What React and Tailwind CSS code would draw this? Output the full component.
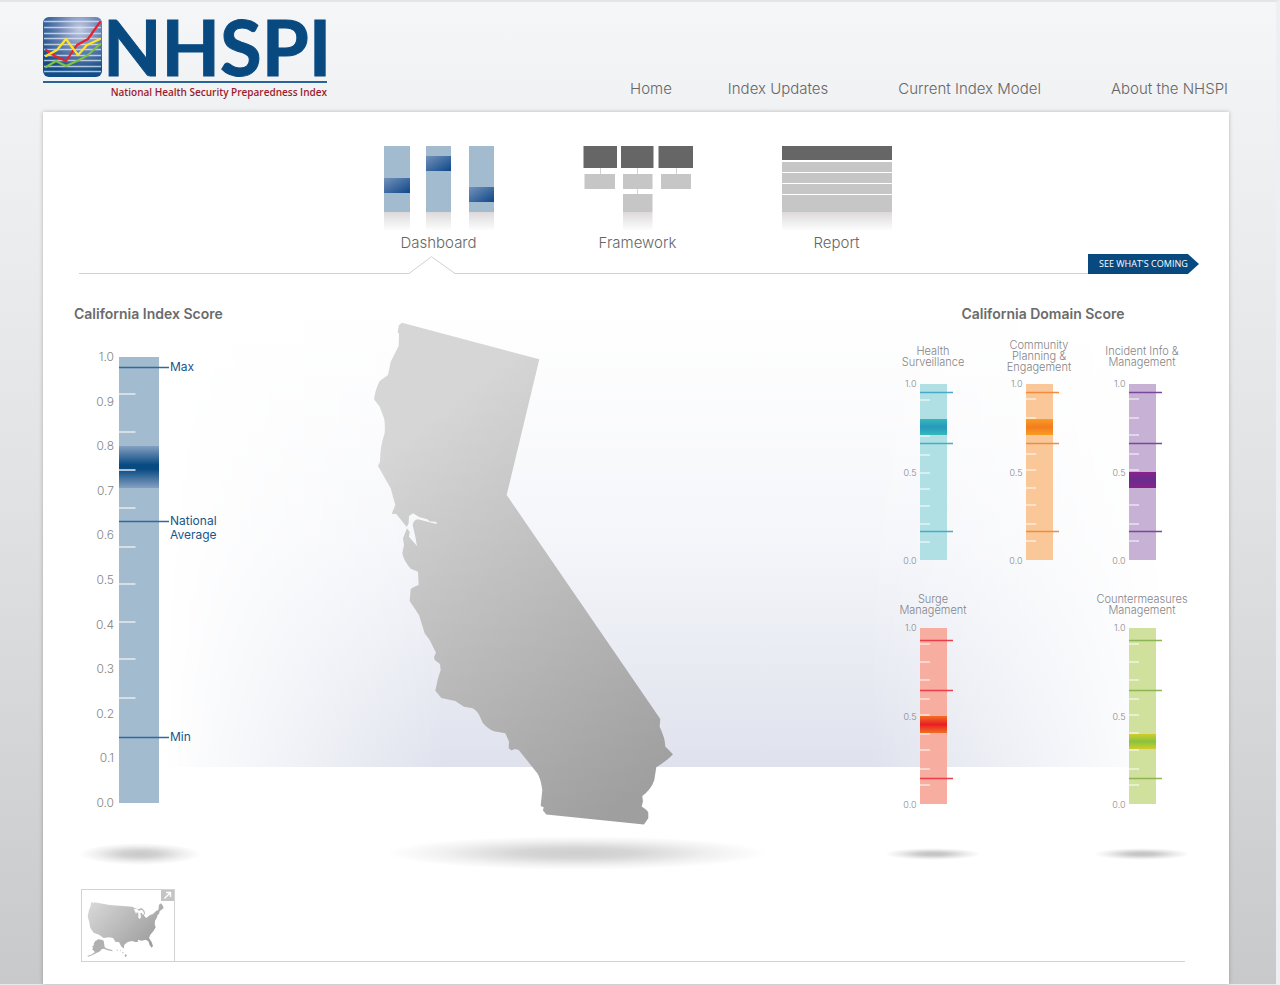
import React from "react";

const NAV = [
  { label: "Home", gap: "" },
  { label: "Index Updates", gap: "ml-14" },
  { label: "Current Index Model", gap: "ml-[70px]" },
  { label: "About the NHSPI", gap: "ml-[70px]" },
];

function Logo() {
  return (
    <a href="#home" className="flex w-[284px] flex-col text-[#084a80]">
      <span className="flex h-[62px] items-center justify-between">
        <svg className="h-[60px] w-[60px] shrink-0" viewBox="0 0 60 60" aria-hidden="true">
          <defs>
            <radialGradient id="tile" cx="0.62" cy="0.2" r="0.75">
              <stop offset="0" stopColor="#c3cbe2" />
              <stop offset="0.5" stopColor="#6480b1" />
              <stop offset="1" stopColor="#124d88" />
            </radialGradient>
          </defs>
          <rect width="59" height="60" rx="6" fill="url(#tile)" />
          <g stroke="#e3e9f4" strokeOpacity="0.75" strokeWidth="1.4">
            {[4, 10, 16, 21, 27, 32, 38, 43, 49, 54].map((y) => (
              <path key={y} d={`M1 ${y}.5H58`} />
            ))}
          </g>
          <g fill="none" strokeWidth="2.2" strokeLinejoin="round" strokeLinecap="round">
            <path d="M3 50 13 44 23 49 36 43 45 38 57 27" stroke="#7cc142" />
            <path d="M3 33 12 39 23 44 34 28 45 22 57 5" stroke="#e8212b" />
            <path d="M3 39 14 33 23 22 35 38 44 28 57 22" stroke="#fde428" />
          </g>
        </svg>
        <span className="-mr-1 font-['Lato',sans-serif] text-[76px] leading-[62px] font-bold [-webkit-text-stroke:1px_#084a80]">
          NHSPI
        </span>
      </span>
      <span className="mt-[3px] h-[2px] bg-[#2a6496]" />
      <span className="mt-px text-right font-['Open_Sans',sans-serif] text-[10px] leading-4 font-semibold text-[#9c1c2c]">
        National Health Security Preparedness Index
      </span>
    </a>
  );
}

function DashboardIcon() {
  const bars = [
    { x: 0, w: 26, y: 32 },
    { x: 42, w: 25, y: 10 },
    { x: 85, w: 25, y: 41 },
  ];
  return (
    <svg className="h-[86px] w-[110px]" viewBox="0 0 110 86" aria-hidden="true">
      <defs>
        <linearGradient id="mark" x1="0" y1="0" x2="1" y2="1">
          <stop offset="0" stopColor="#7392bb" />
          <stop offset="1" stopColor="#0f4788" />
        </linearGradient>
        <linearGradient id="fade" x1="0" y1="0" x2="0" y2="1">
          <stop offset="0" stopColor="#dcd9da" />
          <stop offset="1" stopColor="#ffffff" />
        </linearGradient>
      </defs>
      {bars.map((b) => (
        <g key={b.x}>
          <rect x={b.x} y="0" width={b.w} height="66" fill="#a3bbce" />
          <rect x={b.x} y={b.y} width={b.w} height="15" fill="url(#mark)" />
          <rect x={b.x} y="66" width={b.w} height="19" fill="url(#fade)" />
        </g>
      ))}
    </svg>
  );
}

function FrameworkIcon() {
  return (
    <svg className="h-[86px] w-[110px]" viewBox="0 0 110 86" aria-hidden="true">
      <path d="M17.5 22v6M54.5 22v6M93.5 22v6M54.5 43v6" stroke="#d2d2d2" />
      <g fill="#666666">
        <rect x="0.5" y="0" width="33.5" height="22" />
        <rect x="38" y="0" width="32.5" height="22" />
        <rect x="75.5" y="0" width="34.5" height="22" />
      </g>
      <g fill="#c6c6c6">
        <rect x="1.5" y="28" width="30.5" height="15" />
        <rect x="40" y="28" width="29.5" height="15" />
        <rect x="78" y="28" width="30" height="15" />
        <rect x="40" y="48" width="29.5" height="18" />
      </g>
      <rect x="40" y="66" width="29.5" height="19" fill="url(#fade)" />
    </svg>
  );
}

function ReportIcon() {
  return (
    <svg className="h-[86px] w-[110px]" viewBox="0 0 110 86" aria-hidden="true">
      <rect width="110" height="14" fill="#666666" />
      <g fill="#c6c6c6">
        <rect y="16" width="110" height="10" />
        <rect y="27" width="110" height="10" />
        <rect y="38" width="110" height="10" />
        <rect y="49" width="110" height="17" />
      </g>
      <rect y="66" width="110" height="19" fill="url(#fade)" />
    </svg>
  );
}

const TABS = [
  { label: "Dashboard", Icon: DashboardIcon },
  { label: "Framework", Icon: FrameworkIcon },
  { label: "Report", Icon: ReportIcon },
];

function GroundShadow({ id, className, color }) {
  return (
    <svg className={className} viewBox="0 0 100 20" preserveAspectRatio="none" aria-hidden="true">
      <defs>
        <radialGradient id={id}>
          <stop offset="0" stopColor={color} />
          <stop offset="0.3" stopColor={color} stopOpacity="0.85" />
          <stop offset="0.7" stopColor={color} stopOpacity="0.3" />
          <stop offset="1" stopColor={color} stopOpacity="0" />
        </radialGradient>
      </defs>
      <ellipse cx="50" cy="10" rx="50" ry="10" fill={`url(#${id})`} />
    </svg>
  );
}

const INDEX_TICKS = [37, 75, 113, 151, 190, 227, 265, 302, 341];
const INDEX_LABELS = ["1.0", "0.9", "0.8", "0.7", "0.6", "0.5", "0.4", "0.3", "0.2", "0.1", "0.0"];
const INDEX_MARKS = [
  { label: "Max", y: 10 },
  { label: "National Average", y: 164 },
  { label: "Min", y: 380 },
];

function IndexScore() {
  return (
    <section className="w-[170px]">
      <h2 className="text-[14px] leading-5 font-semibold whitespace-nowrap text-[#6b6b6b]">California Index Score</h2>
      <div className="mt-[33px] flex pl-5">
        <div className="-my-2 flex h-[462px] w-5 flex-col justify-between text-right text-[12px] leading-4 font-light text-[#858587]">
          {INDEX_LABELS.map((l) => (
            <span key={l}>{l}</span>
          ))}
        </div>
        <div className="relative ml-[5px] h-[446px] w-10">
          <svg className="h-full w-10 overflow-visible" viewBox="0 0 40 446" aria-hidden="true">
            <defs>
              <linearGradient id="indexBand" x1="0" y1="0" x2="0" y2="1">
                <stop offset="0" stopColor="#85a0c1" />
                <stop offset="0.45" stopColor="#084a82" />
                <stop offset="0.55" stopColor="#084a82" />
                <stop offset="1" stopColor="#85a0c1" />
              </linearGradient>
            </defs>
            <rect width="40" height="446" fill="#a3bbce" />
            <rect y="89" width="40" height="42" fill="url(#indexBand)" />
            {INDEX_TICKS.map((y) => (
              <path key={y} d={`M0 ${y}H16.5`} stroke="#e4ebf1" strokeWidth="1.5" />
            ))}
            {INDEX_MARKS.map((m) => (
              <path key={m.label} d={`M0 ${m.y}.5H50`} stroke="#2d6a9e" strokeWidth="1.3" />
            ))}
          </svg>
          {INDEX_MARKS.map((m) => (
            <span
              key={m.label}
              className="absolute left-[51px] -mt-[7px] w-[60px] text-[12px] leading-[14px] text-[#17568d]"
              style={{ top: m.y }}
            >
              {m.label}
            </span>
          ))}
        </div>
      </div>
      <GroundShadow id="indexShadow" className="mt-10 ml-[5px] h-[22px] w-[122px]" color="#c9c9c9" />
    </section>
  );
}

function StateMap() {
  return (
    <div className="flex flex-col">
      <svg className="h-[506px] w-[380px]" viewBox="0 0 380 506" role="img" aria-label="California">
        <defs>
          <linearGradient id="land" gradientUnits="userSpaceOnUse" x1="120" y1="400" x2="900" y2="1400">
            <stop offset="0" stopColor="#d6d6d6" />
            <stop offset="0.4" stopColor="#c1c0c1" />
            <stop offset="1" stopColor="#9f9f9f" />
          </linearGradient>
        </defs>
        <path
          transform="translate(-1 -10) scale(0.3333)"
          fill="url(#land)"
          d="M132 38 544 148 446 555 907 1227 905 1250Q922 1285 922 1310L945 1333Q930 1350 895 1372L889 1410Q880 1438 853 1458L855 1475 851 1490Q868 1500 871 1508L871 1525 858 1544 565 1514 555 1502 557 1492 548 1488 553 1440Q548 1405 538 1390L510 1355 482 1320 470 1317 461 1322 452 1315 453 1295 442 1270 408 1264Q390 1257 375 1240L362 1212Q350 1195 340 1194L318 1190 292 1173 250 1164 232 1142 240 1105 248 1080 246 1062 230 1050 228 1040 234 1028 215 990 200 970 183 915 155 873 158 838Q165 830 182 825L180 785 158 776Q137 752 133 730L138 705 135 685 147 655 155 665 153 680 177 708 172 680 164 645Q166 630 180 628L235 642 236 636 214 634 208 628 185 622 165 610 153 618 152 640 146 651 115 612 101 611 112 585 98 535 60 468 66 455Q66 410 80 370 82 340 78 325L65 290 48 268Q52 238 65 213L90 195 98 155 122 108 123 72 119 65 123 45Z"
        />
      </svg>
      <GroundShadow id="mapShadow" className="mt-2.5 ml-7 h-[34px] w-[380px]" color="#cecece" />
    </div>
  );
}

const DOMAINS = [
  {
    id: "surveillance", place: "pt-[6px] [&>h3]:h-[27px]", lines: ["Health", "Surveillance"], bar: "#b1e0e4", line: "#46aac8",
    edge: "#35b8bd", core: "#2798ba", ticks: [16, 52, 71, 89, 105, 122, 140, 158], marks: [8, 59, 147], band: [35, 16],
  },
  {
    id: "planning", place: "[&>h3]:h-[33px]", lines: ["Community", "Planning &", "Engagement"], bar: "#fac898", line: "#f48a3e",
    edge: "#f89d20", core: "#f47b20", ticks: [15, 34, 70, 86, 104, 121, 140, 157], marks: [8, 59, 147], band: [35, 16],
  },
  {
    id: "incident", place: "pt-[6px] [&>h3]:h-[27px]", lines: ["Incident Info &", "Management"], bar: "#c7b2d5", line: "#7a479f",
    edge: "#8b2187", core: "#672d8f", ticks: [15, 34, 51, 70, 86, 121, 140, 157], marks: [8, 59, 147], band: [88, 16],
  },
  {
    id: "surge", place: "pt-[10px] [&>h3]:h-[23px]", lines: ["Surge", "Management"], bar: "#f7ada0", line: "#ec3d4a",
    edge: "#f26f21", core: "#e91e25", ticks: [16, 34, 52, 71, 87, 106, 122, 141, 157], marks: [12, 62, 150], band: [88, 17],
  },
  {
    id: "countermeasures", place: "col-start-3 pt-[10px] [&>h3]:h-[23px]", lines: ["Countermeasures", "Management"], bar: "#d0e19d", line: "#8fb454",
    edge: "#d3cc2b", core: "#86c440", ticks: [16, 34, 52, 71, 87, 105, 122, 141, 157], marks: [12, 62, 150], band: [106, 15],
  },
];

function DomainGauge({ data }) {
  return (
    <div className={`flex flex-col items-center ${data.place}`}>
      <h3 className="flex flex-col text-center text-[11px] leading-[11px] font-light whitespace-nowrap text-[#858588]">
        {data.lines.map((l) => (
          <span key={l}>{l}</span>
        ))}
      </h3>
      <div className="relative mt-[11px] h-44 w-[27px]">
        <svg className="h-full w-[27px] overflow-visible" viewBox="0 0 27 176" aria-hidden="true">
          <defs>
            <linearGradient id={data.id} x1="0" y1="0" x2="0" y2="1">
              <stop offset="0" stopColor={data.edge} />
              <stop offset="0.5" stopColor={data.core} />
              <stop offset="1" stopColor={data.edge} />
            </linearGradient>
          </defs>
          <rect width="27" height="176" fill={data.bar} />
          {data.ticks.map((y) => (
            <path key={y} d={`M0 ${y}H10`} stroke="#ffffff" strokeOpacity="0.65" strokeWidth="1.5" />
          ))}
          <rect y={data.band[0]} width="27" height={data.band[1]} fill={`url(#${data.id})`} />
          {data.marks.map((y) => (
            <path key={y} d={`M0 ${y}.5H33`} stroke={data.line} strokeWidth="1.3" />
          ))}
        </svg>
        <div className="absolute -top-[5px] right-full mr-[3px] flex h-[187px] flex-col justify-between text-right text-[9px] leading-[10px] font-light text-[#858588]">
          <span>1.0</span>
          <span>0.5</span>
          <span>0.0</span>
        </div>
      </div>
    </div>
  );
}

function DomainScores() {
  return (
    <section className="w-[324px]">
      <h2 className="text-center text-[14px] leading-5 font-semibold text-[#6b6b6b]">California Domain Score</h2>
      <div className="mt-4 grid grid-cols-[104px_108px_98px] gap-y-6">
        {DOMAINS.map((d) => (
          <DomainGauge key={d.id} data={d} />
        ))}
      </div>
      <div className="mt-11 grid grid-cols-[104px_108px_98px] justify-items-center">
        <GroundShadow id="surgeShadow" className="h-3 w-24" color="#c2c2c2" />
        <GroundShadow id="counterShadow" className="col-start-3 h-3 w-24" color="#c2c2c2" />
      </div>
    </section>
  );
}

function CountryButton() {
  return (
    <button type="button" aria-label="Show the national map" className="relative h-[73px] w-[94px] border border-[#d3d3d3] bg-white">
      <svg className="h-[71px] w-[92px]" viewBox="67 58 276 213" aria-hidden="true">
        <defs>
          <linearGradient id="us" x1="0" y1="0" x2="1" y2="0.6">
            <stop offset="0" stopColor="#dadada" />
            <stop offset="1" stopColor="#9f9f9f" />
          </linearGradient>
        </defs>
        <path
          fill="url(#us)"
          d="M95 93 101 98 104 95 150 103 218 108 224 112 236 116 246 112 254 120 256 126 253 135 260 142 270 134 280 130 290 120 296 118 298 102 304 98 309 104 312 112 300 122 298 130 294 132 292 140 286 150 285 160 288 170 282 180 272 192 268 202 276 214 280 226 276 231 270 224 266 212 258 207 246 210 234 207 236 213 228 214 216 211 204 214 194 222 192 234 184 226 178 214 168 214 160 202 148 200 132 202 118 192 102 186 92 172 88 150 84 138 88 118 92 108Z"
        />
        <path fill="#ffffff" d="M222 116l10-1 6 6 6-4 6 3 3 8-3 6-4-8-4 2 2 12-4 5-4-4v-14l-4-3-3 6-2-6z" />
        <path
          fill="#b0b0b0"
          d="M106 212l10-6 10 1 6 3 3 20 8 4 14 4 2 4-15-3-11-5-6 1-8 8-9 4-11 6-14 5-2-2 14-5 9-7-4-4-5-5 4-4-4-4 6-3-1-4z"
        />
        <path fill="#b0b0b0" d="M171 236l4 3-3 2zM181 238l4 2-3 2zM187 243l6 3-4 2zM196 250l6 4-4 6-3-4z" />
      </svg>
      <span className="absolute top-0 right-0 flex h-[11px] w-[13px] items-center justify-center bg-[#c4c4c4]">
        <svg className="h-[9px] w-[9px]" viewBox="0 0 9 9" aria-hidden="true">
          <path d="M3 1.5H7.5V6M7.5 1.5 1.5 7.5" fill="none" stroke="#fff" strokeWidth="1.4" />
        </svg>
      </span>
    </button>
  );
}

export default function App() {
  return (
    <div className="min-h-screen border-t-2 border-r-4 border-b-2 border-t-[#e4e5e8] border-r-[#eeeff2] border-b-[#e9e9ea] bg-linear-to-b from-[#f5f6f8] via-[#e1e2e4] to-[#c8c9cb] font-['Inter',sans-serif]">
      <header className="flex items-start justify-between pr-[48px] pl-[43px]">
        <div className="h-[110px] pt-[14px]">
          <Logo />
        </div>
        <nav className="mt-[77px] flex text-[15px] leading-5 font-light text-[#666]">
          {NAV.map((n) => (
            <a key={n.label} href="#top" className={n.gap}>
              {n.label}
            </a>
          ))}
        </nav>
      </header>

      <main className="mr-[47px] ml-[43px] bg-white pb-[22px] shadow-[0_0_4px_rgba(0,0,0,0.25)]">
        <div className="flex justify-center gap-[89px] pt-[34px] pl-[3px]">
          {TABS.map(({ label, Icon }) => (
            <button key={label} type="button" className="flex w-[110px] flex-col items-center">
              <Icon />
              <span className="mt-px text-[15px] leading-5 font-light text-[#666]">{label}</span>
            </button>
          ))}
        </div>

        <div className="mt-px flex items-end pr-[30px] pl-9">
          <span className="w-[330px] border-b border-[#d0d0d0]" />
          <svg className="h-[18px] w-[46px]" viewBox="0 0 46 18" aria-hidden="true">
            <path d="M0 17.5 22.5 0.7 46 17.5" fill="none" stroke="#d0d0d0" />
          </svg>
          <span className="grow border-b border-[#d0d0d0]" />
          <a
            href="#coming"
            className="flex h-5 w-[111px] items-center bg-[#084a80] pl-[11px] font-['Open_Sans',sans-serif] text-[9px] leading-4 whitespace-nowrap text-white [clip-path:polygon(0_0,90%_0,100%_50%,90%_100%,0_100%)]"
          >
            SEE WHAT'S COMING
          </a>
        </div>

        <div className="relative flex items-start justify-between pt-[30px] pr-[24px] pl-[31px]">
          <div className="absolute top-9 right-[60px] left-[120px] h-[457px] bg-linear-to-b from-white via-[#f5f6fa] to-[#dfe2ed] mask-[linear-gradient(to_right,transparent,black_28%,black_70%,transparent)]" />
          <div className="relative">
            <IndexScore />
          </div>
          <div className="relative mt-4">
            <StateMap />
          </div>
          <div className="relative">
            <DomainScores />
          </div>
        </div>

        <div className="mt-[19px] flex items-end pr-11 pl-[38px]">
          <CountryButton />
          <span className="grow border-b border-[#d3d3d3]" />
        </div>
      </main>
    </div>
  );
}
